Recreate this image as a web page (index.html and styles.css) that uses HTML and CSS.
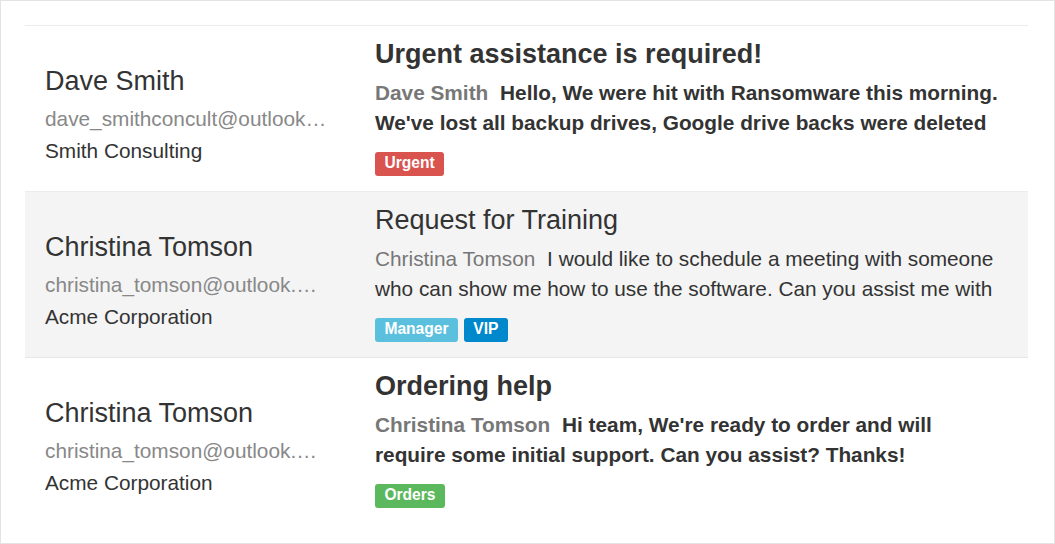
FILE: index.html
```html
<!DOCTYPE html>
<html lang="en">
<head>
<meta charset="utf-8">
<title>Tickets</title>
<link rel="stylesheet" href="styles.css">
</head>
<body>
<div class="frame">
  <ul class="ticket-list">
    <li class="ticket unread">
      <div class="contact">
        <div class="contact-name">Dave Smith</div>
        <div class="contact-email">dave_smithconcult@outlook.com</div>
        <div class="contact-company">Smith Consulting</div>
      </div>
      <div class="message">
        <div class="subject">Urgent assistance is required!</div>
        <div class="preview"><span class="sender">Dave Smith</span> Hello, We were hit with Ransomware this morning. We've lost all backup drives, Google drive backs were deleted and our servers are all encrypted.</div>
        <div class="labels"><span class="label label-danger">Urgent</span></div>
      </div>
    </li>
    <li class="ticket read">
      <div class="contact">
        <div class="contact-name">Christina Tomson</div>
        <div class="contact-email">christina_tomson@outlook.com</div>
        <div class="contact-company">Acme Corporation</div>
      </div>
      <div class="message">
        <div class="subject">Request for Training</div>
        <div class="preview"><span class="sender">Christina Tomson</span> I would like to schedule a meeting with someone who can show me how to use the software. Can you assist me with this request?</div>
        <div class="labels"><span class="label label-info">Manager</span><span class="label label-primary">VIP</span></div>
      </div>
    </li>
    <li class="ticket unread">
      <div class="contact">
        <div class="contact-name">Christina Tomson</div>
        <div class="contact-email">christina_tomson@outlook.com</div>
        <div class="contact-company">Acme Corporation</div>
      </div>
      <div class="message">
        <div class="subject">Ordering help</div>
        <div class="preview"><span class="sender">Christina Tomson</span> Hi team, We're ready to order and will require some initial support. Can you assist? Thanks!</div>
        <div class="labels"><span class="label label-success">Orders</span></div>
      </div>
    </li>
  </ul>
</div>
</body>
</html>
```

FILE: styles.css
```css
html, body {
  margin: 0;
  padding: 0;
  background: #fff;
}

body {
  font-family: "Liberation Sans", Arial, Helvetica, sans-serif;
  color: #333;
}

.frame {
  box-sizing: border-box;
  width: 1055px;
  height: 544px;
  border: 1px solid #e3e3e3;
  padding: 24px 26px 0 24px;
  overflow: hidden;
}

.ticket-list {
  list-style: none;
  margin: 0;
  padding: 0;
}

.ticket {
  display: flex;
  border-top: 1px solid #ececec;
  padding: 0 20px 15.5px 20px;
}

.ticket.read {
  background: #f4f4f4;
}

.ticket.read + .ticket {
  border-top-color: #e6e6e6;
}

.contact {
  width: 330px;
  flex: 0 0 330px;
  padding-top: 40px;
}

.contact-name {
  font-size: 27px;
  line-height: 30px;
  color: #333;
  margin-bottom: 8px;
}

.contact-email {
  font-size: 20.8px;
  line-height: 30px;
  color: #888;
  width: 282px;
  white-space: nowrap;
  overflow: hidden;
  text-overflow: ellipsis;
  margin-bottom: 2px;
}

.contact-company {
  font-size: 20.8px;
  line-height: 30px;
  color: #333;
}

.message {
  flex: 1;
  min-width: 0;
  padding-top: 12.5px;
}

.subject {
  font-size: 27px;
  line-height: 30px;
  color: #333;
  margin-bottom: 9px;
}

.preview {
  font-size: 20.8px;
  line-height: 30px;
  color: #333;
  overflow: hidden;
  height: 60px;
  margin-bottom: 14px;
}

.sender {
  color: #777;
  margin-right: 6px;
}

.unread .subject,
.unread .preview {
  font-weight: bold;
}

.labels {
  display: flex;
  gap: 6px;
}

.label {
  display: inline-block;
  font-size: 15.6px;
  font-weight: bold;
  line-height: 16px;
  padding: 3px 9.4px 5px;
  color: #fff;
  border-radius: 3px;
  white-space: nowrap;
}

.label-danger { background: #d9534f; }
.label-info { background: #5bc0de; }
.label-primary { background: #0088cc; }
.label-success { background: #5cb85c; }
```
